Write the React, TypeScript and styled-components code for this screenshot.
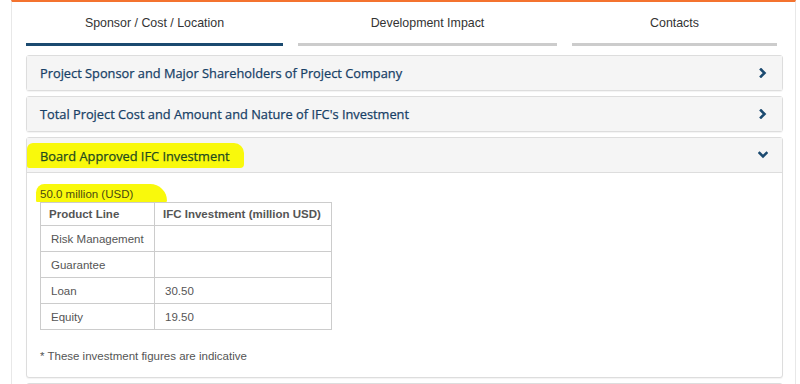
import React from 'react';
import styled, { createGlobalStyle } from 'styled-components';

const GlobalStyle = createGlobalStyle`
  html, body {
    margin: 0;
    padding: 0;
    background: #ffffff;
    overflow: hidden;
  }
`;

const Page = styled.div`
  width: 785px;
  height: 384px;
  margin-left: 11px;
  box-sizing: border-box;
  border-top: 2px solid #f4732f;
  border-left: 1px solid #e8e8e8;
  border-right: 1px solid #e8e8e8;
  padding: 0 12px 0 14px;
  overflow: hidden;
`;

const TabBar = styled.div`
  display: grid;
  grid-template-columns: 257px 259px 205px;
  column-gap: 15px;
  margin-bottom: 9px;
`;

const Tab = styled.div<{ $active?: boolean }>`
  height: 41px;
  display: flex;
  align-items: center;
  justify-content: center;
  border-bottom: 3px solid ${(p) => (p.$active ? '#1b4a70' : '#cccccc')};
  font-family: 'Liberation Sans', Arial, sans-serif;
  font-size: 12.4px;
  color: #333333;
`;

const Panel = styled.div`
  border: 1px solid #dddddd;
  border-radius: 3px;
  margin-bottom: 5px;
  background: #ffffff;
  box-shadow: 0 1px 1px rgba(0, 0, 0, 0.05);
`;

const PanelHeader = styled.div<{ $open?: boolean }>`
  height: 34px;
  display: flex;
  align-items: center;
  justify-content: space-between;
  padding: 0 14px 0 13px;
  background: #f5f5f5;
  border-bottom: ${(p) => (p.$open ? '1px solid #dddddd' : 'none')};
  font-family: 'Open Sans', sans-serif;
  font-size: 12.8px;
  color: #173f66;
  -webkit-text-stroke: 0.25px #173f66;
`;

const Marked = styled.span`
  background: #f9f90c;
  color: #1f4a20;
  -webkit-text-stroke: 0.25px #1f4a20;
  padding: 4px 14px 3px 13px;
  margin-left: -13px;
  border-radius: 6px 10px 4px 2px;
`;

const Chevron = styled.svg`
  width: 10px;
  height: 10px;
  fill: none;
  stroke: #1b4a70;
  stroke-width: 2.6;
  stroke-linecap: square;
`;

const PanelBody = styled.div`
  padding: 11px 13px 13px;
  font-family: 'Liberation Sans', Arial, sans-serif;
  font-size: 11.5px;
  color: #555555;
`;

const Amount = styled.div`
  display: inline-block;
  line-height: 16px;
  margin-left: -4px;
  padding: 2px 34px 0 4px;
  background: #f9f90c;
  color: #4a4a10;
  border-radius: 14px 28px 2px 2px;
`;

const Table = styled.table`
  border-collapse: collapse;
  width: 292px;
  margin-bottom: 18px;
`;

const Th = styled.th<{ $w?: number }>`
  border: 1px solid #cccccc;
  height: 22px;
  padding: 0 8px;
  text-align: left;
  font-weight: bold;
  color: #555555;
  white-space: nowrap;
  width: ${(p) => (p.$w ? `${p.$w}px` : 'auto')};
`;

const Td = styled.td`
  border: 1px solid #cccccc;
  height: 25px;
  padding: 0 10px;
  color: #555555;
`;

const Note = styled.div`
  line-height: 16px;
  color: #555555;
`;

const ChevronRight = () => (
  <Chevron viewBox="0 0 10 10">
    <polyline points="3,1.5 6.5,5 3,8.5" />
  </Chevron>
);

const ChevronDown = () => (
  <Chevron viewBox="0 0 10 10">
    <polyline points="1.5,3 5,6.5 8.5,3" />
  </Chevron>
);

const sections = [
  'Project Sponsor and Major Shareholders of Project Company',
  "Total Project Cost and Amount and Nature of IFC's Investment",
];

const rows: [string, string][] = [
  ['Risk Management', ''],
  ['Guarantee', ''],
  ['Loan', '30.50'],
  ['Equity', '19.50'],
];

export default function App() {
  return (
    <>
      <GlobalStyle />
      <Page>
        <TabBar>
          <Tab $active>Sponsor / Cost / Location</Tab>
          <Tab>Development Impact</Tab>
          <Tab>Contacts</Tab>
        </TabBar>

        {sections.map((s) => (
          <Panel key={s}>
            <PanelHeader>
              <span>{s}</span>
              <ChevronRight />
            </PanelHeader>
          </Panel>
        ))}

        <Panel>
          <PanelHeader $open>
            <Marked>Board Approved IFC Investment</Marked>
            <ChevronDown />
          </PanelHeader>
          <PanelBody>
            <Amount>50.0 million (USD)</Amount>
            <Table>
              <thead>
                <tr>
                  <Th $w={97}>Product Line</Th>
                  <Th>IFC Investment (million USD)</Th>
                </tr>
              </thead>
              <tbody>
                {rows.map(([name, val]) => (
                  <tr key={name}>
                    <Td>{name}</Td>
                    <Td>{val}</Td>
                  </tr>
                ))}
              </tbody>
            </Table>
            <Note>* These investment figures are indicative</Note>
          </PanelBody>
        </Panel>

        <Panel>
          <PanelHeader>
            <span>&nbsp;</span>
          </PanelHeader>
        </Panel>
      </Page>
    </>
  );
}
